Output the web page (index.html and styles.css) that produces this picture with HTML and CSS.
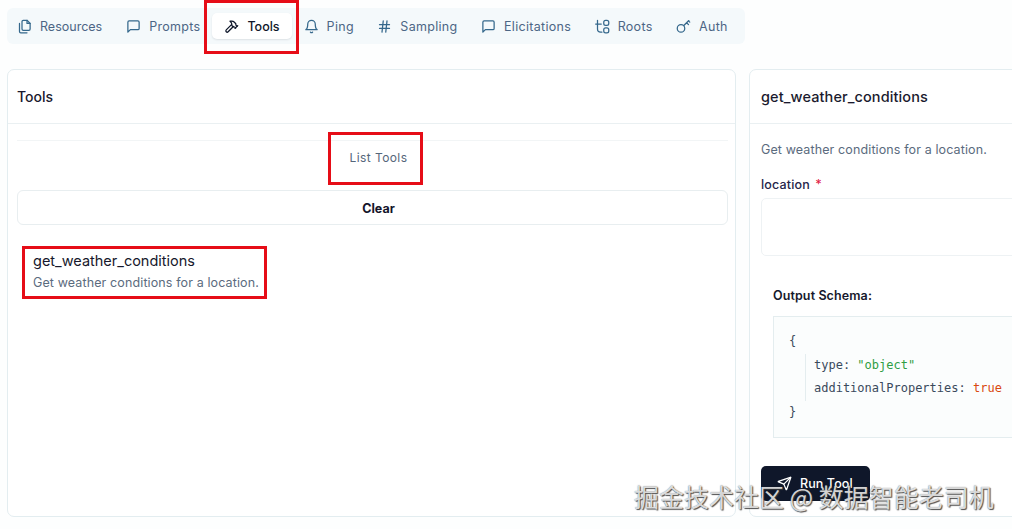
FILE: index.html
```html
<!DOCTYPE html>
<html lang="en">
<head>
<meta charset="utf-8">
<title>Tools</title>
<link rel="stylesheet" href="styles.css">
</head>
<body>
<nav class="tabs">
  <a class="tab tab-first"><svg class="ico" viewBox="0 0 24 24"><path d="M10 2h6l5 5v9a2 2 0 0 1-2 2h-9a2 2 0 0 1-2-2V4a2 2 0 0 1 2-2z"/><path d="M16 2v5h5"/><path d="M4 7v13a2 2 0 0 0 2 2h10"/></svg>Resources</a>
  <a class="tab tab-before-active"><svg class="ico" viewBox="0 0 24 24"><path d="M21 15a2 2 0 0 1-2 2H7l-4 4V5a2 2 0 0 1 2-2h14a2 2 0 0 1 2 2z"/></svg>Prompts</a>
  <a class="tab active"><svg class="ico" viewBox="0 0 24 24"><path d="m15 12-8.4 8.4a2.1 2.1 0 0 1-3-3L12 9"/><path d="M17.6 15 22 10.6"/><path d="m20.9 11.7-1.3-1.3c-.5-.5-.7-1-.7-1.7V7.6l-2.3-2.3a6 6 0 0 0-4.2-1.8H9.6l.9.8a6.2 6.2 0 0 1 2 4.5v1.6l2 2h1.2c.7 0 1.3.2 1.7.7l1.3 1.3"/></svg>Tools</a>
  <a class="tab"><svg class="ico" viewBox="0 0 24 24"><path d="M6 8a6 6 0 0 1 12 0c0 7 3 9 3 9H3s3-2 3-9"/><path d="M10.3 21a2 2 0 0 0 3.4 0"/></svg>Ping</a>
  <a class="tab"><svg class="ico" viewBox="0 0 24 24"><path d="M4 9h16M4 15h16M10 3 8 21M16 3l-2 18"/></svg>Sampling</a>
  <a class="tab"><svg class="ico" viewBox="0 0 24 24"><path d="M21 15a2 2 0 0 1-2 2H7l-4 4V5a2 2 0 0 1 2-2h14a2 2 0 0 1 2 2z"/></svg>Elicitations</a>
  <a class="tab"><svg class="ico" viewBox="0 0 24 24"><path d="M4 2v14a5 5 0 0 0 5 5h2"/><path d="M1 8h9"/><rect x="14" y="2" width="8" height="8" rx="3"/><rect x="14" y="14" width="8" height="8" rx="3"/></svg>Roots</a>
  <a class="tab"><svg class="ico" viewBox="0 0 24 24"><circle cx="8" cy="15" r="6"/><path d="m12.5 10.5 8-8M17 6l3 3M20 3l2 2"/></svg>Auth</a>
</nav>

<main class="columns">
  <section class="card list-card">
    <h2 class="card-title">Tools</h2>
    <div class="card-body">
      <div class="btn btn-list">List Tools</div>
      <div class="btn btn-clear">Clear</div>
      <div class="tool-item">
        <div class="tool-name">get_weather_conditions</div>
        <div class="tool-desc">Get weather conditions for a location.</div>
      </div>
    </div>
  </section>

  <section class="card detail-card">
    <h2 class="card-title">get_weather_conditions</h2>
    <div class="card-body detail-body">
      <p class="detail-desc">Get weather conditions for a location.</p>
      <label class="field-label">location <span class="req">*</span></label>
      <div class="field-input"></div>
      <div class="schema">
        <h3 class="schema-title">Output Schema:</h3>
        <div class="code">
          <div class="code-line">{</div>
          <div class="code-inner">
            <div class="code-line">type: <span class="str">"object"</span></div>
            <div class="code-line">additionalProperties: <span class="bool">true</span></div>
          </div>
          <div class="code-line">}</div>
        </div>
      </div>
      <div class="run"><svg class="ico run-ico" viewBox="0 0 24 24"><path d="M14.5 21.7a.5.5 0 0 0 .9 0l6.5-19a.5.5 0 0 0-.6-.6l-19 6.5a.5.5 0 0 0 0 .9l7.9 3.2a2 2 0 0 1 1.1 1.1z"/><path d="m21.9 2.1-10.9 10.9"/></svg>Run Tool</div>
    </div>
  </section>
</main>

<div class="mark mark-tab"></div>
<div class="mark mark-list"></div>
<div class="mark mark-item"></div>
<div class="watermark">掘金技术社区 @ 数据智能老司机</div>
</body>
</html>
```

FILE: styles.css
```css
* { box-sizing: border-box; }
html, body { margin: 0; height: 100%; overflow: hidden; }
body {
  width: 1012px;
  height: 529px;
  position: relative;
  background: #fdfefe;
  color: #0f172a;
  font-family: Inter, "Noto Sans", "Noto Sans CJK SC", sans-serif;
  padding: 8px 0 0 7px;
}
.tabs {
  width: 738px;
  height: 36px;
  background: #f4f9fb;
  border-radius: 6px;
  display: flex;
  align-items: center;
  padding: 0 0 0 10px;
  font-size: 12.5px;
  letter-spacing: .3px;
  color: #4c6685;
}
.tab { display: flex; align-items: center; gap: 8px; height: 26px; margin-right: 23.5px; white-space: nowrap; }
.tab.tab-first { letter-spacing: 0; margin-right: 24px; }
.tab.tab-before-active { margin-right: 12px; }
.tab.active {
  background: #fff;
  color: #0f172a;
  font-weight: 500;
  letter-spacing: 0;
  border-radius: 5px;
  box-shadow: 0 1px 2px rgba(15, 23, 42, .1);
  padding: 0 12px;
  margin-right: 12px;
}
.ico { width: 15px; height: 15px; fill: none; stroke: #35688c; stroke-width: 2; stroke-linecap: round; stroke-linejoin: round; flex: none; }
.active .ico { stroke: #0f172a; }

.columns { display: flex; gap: 13px; margin-top: 25px; width: 1040px; }
.card {
  height: 448px;
  background: #fff;
  border: 1px solid #e3edf0;
  border-radius: 7px;
}
.list-card { width: 729px; flex: none; }
.detail-card { width: 290px; flex: none; }
.card-title {
  margin: 0;
  height: 54px;
  padding: 0 9px;
  display: flex;
  align-items: center;
  font-size: 14px;
  font-weight: 500;
  color: #1a1a2e;
  border-bottom: 1px solid #eaf0f2;
}
.detail-card .card-title { padding-left: 11px; font-size: 14.5px; letter-spacing: .1px; }
.card-body { padding: 16px 7px 0 9px; }
.btn { display: flex; justify-content: center; padding-left: 12px; }
.btn-list { height: 50px; padding-top: 9px; font-size: 12px; letter-spacing: .4px; color: #55667a; border-top: 1px solid #f2f5f6; }
.btn-clear {
  height: 35px;
  align-items: center;
  padding-top: 1px;
  font-size: 12.5px;
  font-weight: 700;
  color: #14142b;
  border: 1px solid #e8eef0;
  border-radius: 6px;
}
.tool-item { padding: 26px 0 0 16px; }
.tool-name { font-size: 14.5px; line-height: 20px; color: #16182c; }
.tool-desc { font-size: 12.5px; line-height: 20px; margin-top: 2px; letter-spacing: .12px; color: #5b6b7e; white-space: nowrap; }

.detail-body { padding: 0 0 0 11px; }
.detail-desc { margin: 0; padding-top: 18px; font-size: 12.5px; letter-spacing: .12px; line-height: 16px; color: #5b6b7e; }
.field-label { display: block; margin-top: 19px; font-size: 12.5px; font-weight: 500; letter-spacing: .15px; word-spacing: 2px; line-height: 16px; color: #25254a; }
.req { color: #e11d48; }
.field-input { height: 58px; margin-top: 5px; border: 1px solid #eef2f4; border-radius: 5px; }
.schema { padding: 32px 0 0 12px; }
.schema-title { margin: 0; font-size: 12.5px; font-weight: 600; letter-spacing: .1px; line-height: 16px; color: #16182c; }
.code {
  margin-top: 12px;
  height: 122px;
  padding: 13px 0 0 15px;
  background: #fbfdfd;
  border: 1px solid #e4edef;
  font-family: "DejaVu Sans Mono", "Liberation Mono", monospace;
  font-size: 12px;
  color: #3a4a5c;
  white-space: nowrap;
}
.code-line { height: 23.5px; line-height: 23.5px; }
.code-inner { margin-left: 16px; padding-left: 8px; border-left: 1px solid #e4edef; }
.str { color: #2f9e44; }
.bool { color: #d9480f; }
.run {
  display: flex;
  align-items: center;
  gap: 8px;
  width: 109px;
  height: 35px;
  margin-top: 28px;
  padding-left: 16px;
  background: #0f172a;
  color: #fff;
  font-size: 12.5px;
  font-weight: 500;
  letter-spacing: .1px;
  border-radius: 5px;
}
.run-ico { stroke: #fff; }

.mark { position: absolute; border: 3px solid #e60d17; }
.mark-tab { left: 204px; top: 0; width: 95px; height: 54px; }
.mark-list { left: 328px; top: 132px; width: 95px; height: 53px; }
.mark-item { left: 22px; top: 246px; width: 245px; height: 53px; }
.watermark {
  position: absolute;
  left: 634px;
  top: 480px;
  font-family: "Noto Sans CJK SC", sans-serif;
  font-size: 25px;
  line-height: 32px;
  color: rgba(255, 255, 255, .8);
  text-shadow: 1px 1px 1px rgba(60, 60, 60, .9), 0 0 1px rgba(60, 60, 60, .8);
  white-space: nowrap;
}
```
